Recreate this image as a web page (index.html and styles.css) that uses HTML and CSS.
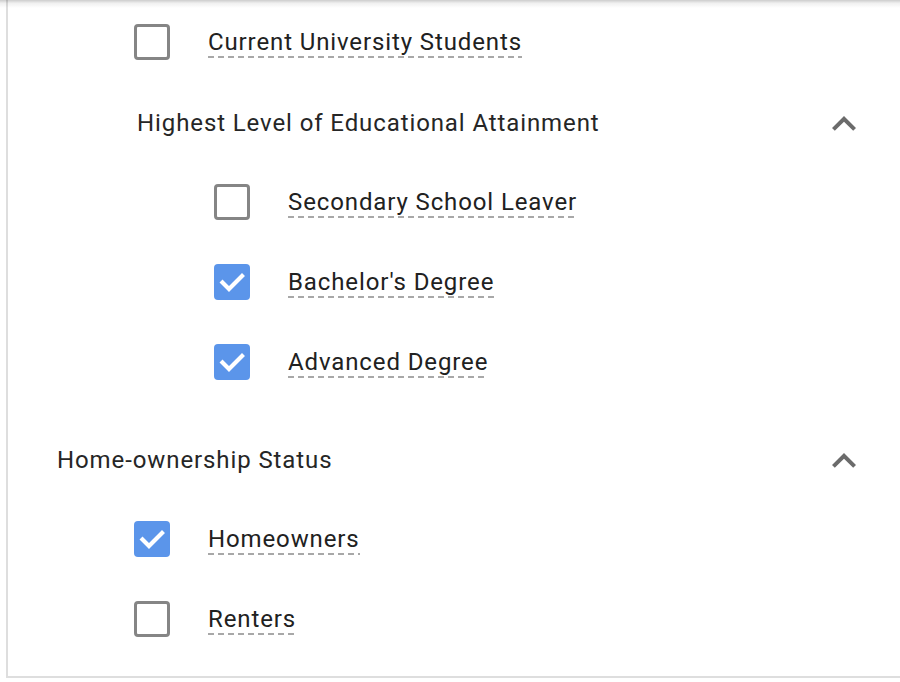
FILE: index.html
```html
<!DOCTYPE html>
<html>
<head>
<meta charset="utf-8">
<link rel="stylesheet" href="styles.css">
</head>
<body>
<div class="panel">
  <div class="row lvl1">
    <span class="box"></span>
    <span class="label">Current University Students</span>
  </div>
  <div class="row heading lvl1">
    <span class="htext">Highest Level of Educational Attainment</span>
    <svg class="chev" viewBox="0 0 24 24"><path d="M12 8l-6 6 1.41 1.41L12 10.83l4.59 4.58L18 14z"/></svg>
  </div>
  <div class="row lvl2">
    <span class="box"></span>
    <span class="label">Secondary School Leaver</span>
  </div>
  <div class="row lvl2">
    <span class="box checked"><svg viewBox="0 0 36 36"><polyline points="8.5,18.5 15,25 28,12"/></svg></span>
    <span class="label">Bachelor's Degree</span>
  </div>
  <div class="row lvl2">
    <span class="box checked"><svg viewBox="0 0 36 36"><polyline points="8.5,18.5 15,25 28,12"/></svg></span>
    <span class="label">Advanced Degree</span>
  </div>
  <div class="row heading lvl0 group">
    <span class="htext">Home-ownership Status</span>
    <svg class="chev" viewBox="0 0 24 24"><path d="M12 8l-6 6 1.41 1.41L12 10.83l4.59 4.58L18 14z"/></svg>
  </div>
  <div class="row lvl1">
    <span class="box checked"><svg viewBox="0 0 36 36"><polyline points="8.5,18.5 15,25 28,12"/></svg></span>
    <span class="label">Homeowners</span>
  </div>
  <div class="row lvl1">
    <span class="box"></span>
    <span class="label">Renters</span>
  </div>
</div>
<div class="topshade"></div>
</body>
</html>
```
FILE: styles.css
```css
html, body {
  margin: 0;
  padding: 0;
  background: #ffffff;
  overflow: hidden;
}
body {
  width: 900px;
  height: 682px;
  position: relative;
  font-family: Roboto, "Liberation Sans", Arial, sans-serif;
  color: #212121;
}
.panel {
  margin-left: 6px;
  border-left: 2px solid #dedede;
  border-bottom: 2px solid #dedede;
  padding: 3px 32px 16px 0;
  display: flex;
  flex-direction: column;
}
.row {
  height: 80px;
  display: flex;
  align-items: center;
  box-sizing: border-box;
}
.lvl0 { padding-left: 48px; }
.lvl1 { padding-left: 126px; }
.lvl2 { padding-left: 206px; }
.heading.lvl1 { padding-left: 128px; }
.group { margin-top: 17px; }
.heading {
  justify-content: space-between;
}
.htext {
  font-size: 24px;
  line-height: 28px;
  letter-spacing: 0.9px;
  color: #262626;
  margin-left: 1px;
}
.chev {
  width: 48px;
  height: 48px;
  fill: #6b6b6b;
  margin-top: 1px;
}
.box {
  width: 36px;
  height: 36px;
  box-sizing: border-box;
  border: 3.5px solid #858585;
  border-radius: 4px;
  flex: none;
  margin-right: 38px;
  margin-top: -2px;
}
.box.checked {
  border: none;
  background: #5b95ea;
  display: flex;
}
.box.checked svg {
  width: 36px;
  height: 36px;
  fill: none;
  stroke: #ffffff;
  stroke-width: 4.2;
  stroke-linecap: square;
}
.label {
  font-size: 24px;
  line-height: 28px;
  letter-spacing: 0.88px;
  padding-bottom: 2px;
  color: #212121;
  background-image: linear-gradient(to right, #a8a8a8 0, #a8a8a8 6px, transparent 6px, transparent 10px);
  background-size: 10px 2px;
  background-repeat: repeat-x;
  background-position: left bottom;
}
.topshade {
  position: absolute;
  left: 0;
  top: 0;
  width: 900px;
  height: 8px;
  background: linear-gradient(to bottom, rgba(0,0,0,0.2), rgba(0,0,0,0.06) 40%, rgba(0,0,0,0));
  pointer-events: none;
}
```
